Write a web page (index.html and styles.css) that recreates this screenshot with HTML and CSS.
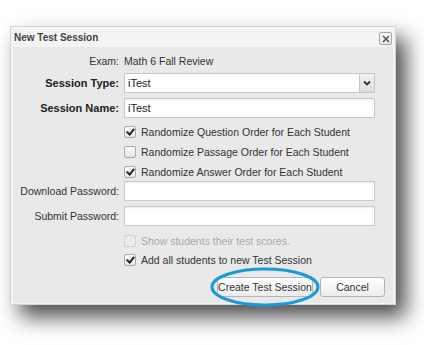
FILE: index.html
```html
<!DOCTYPE html>
<html lang="en">
<head>
  <meta charset="UTF-8" />
  <title>New Test Session</title>
  <link rel="stylesheet" href="styles.css">
</head>
<body>
  <div class="dialog">
    <div class="dialog-title">
      <span>New Test Session</span>
      <button class="close-btn">
        <svg width="8" height="8" viewBox="0 0 8 8"><path d="M1 1L7 7M7 1L1 7" stroke="#555" stroke-width="1.6"/></svg>
      </button>
    </div>
    <div class="dialog-body">
      <div class="row row-exam">
        <label>Exam:</label>
        <div class="value">Math 6 Fall Review</div>
      </div>
      <div class="row row-field">
        <label class="bold">Session Type:</label>
        <div class="select">
          <span class="select-text">iTest</span>
          <span class="select-arrow">
            <svg width="8" height="6" viewBox="0 0 8 6"><path d="M1 1.5L4 4.5L7 1.5" stroke="#333" stroke-width="1.8" fill="none"/></svg>
          </span>
        </div>
      </div>
      <div class="row row-field gap">
        <label class="bold">Session Name:</label>
        <div class="input">iTest</div>
      </div>

      <div class="checks">
        <div class="row row-check">
          <label></label>
          <div class="check-item"><span class="box checked"></span>Randomize Question Order for Each Student</div>
        </div>
        <div class="row row-check">
          <label></label>
          <div class="check-item"><span class="box"></span>Randomize Passage Order for Each Student</div>
        </div>
        <div class="row row-check short">
          <label></label>
          <div class="check-item"><span class="box checked"></span>Randomize Answer Order for Each Student</div>
        </div>
      </div>

      <div class="row row-field">
        <label>Download Password:</label>
        <div class="input"></div>
      </div>
      <div class="row row-field gap">
        <label>Submit Password:</label>
        <div class="input"></div>
      </div>

      <div class="checks2">
        <div class="row row-check short">
          <label></label>
          <div class="check-item disabled"><span class="box"></span>Show students their test scores.</div>
        </div>
        <div class="row row-check">
          <label></label>
          <div class="check-item"><span class="box checked"></span>Add all students to new Test Session</div>
        </div>
      </div>

      <div class="actions">
        <button class="btn btn-create">Create Test Session</button>
        <button class="btn btn-cancel">Cancel</button>
        <svg class="oval" width="112" height="44" viewBox="0 0 112 44"><ellipse cx="56" cy="22" rx="53" ry="18" fill="none" stroke="#1a9bd8" stroke-width="3"/></svg>
      </div>
    </div>
  </div>
</body>
</html>
```

FILE: styles.css
```css
html {
  background: #fff;
}
body {
  margin: 0;
  min-height: 345px;
  padding-top: 26px;
  box-sizing: border-box;
  background: #fff;
  font-family: 'Liberation Sans', Arial, sans-serif;
  font-size: 10.5px;
  color: #333;
}
.dialog {
  margin-left: 10px;
  width: 380px;
  background: #f3f3f3;
  border: 1px solid #d4d4d4;
  padding: 0 2px 1px 2px;
  box-shadow: 10px 12px 20px rgba(0, 0, 0, 0.7);
}
.dialog-title {
  height: 20px;
  display: flex;
  align-items: center;
  justify-content: space-between;
  padding-left: 1px;
  font-weight: bold;
  font-size: 10px;
  color: #444;
}
.close-btn {
  width: 13px;
  height: 13px;
  margin-right: 1px;
  margin-top: 3px;
  padding: 0;
  border: 1px solid #a8a8a8;
  border-radius: 2px;
  background: linear-gradient(#fafafa, #e6e6e6);
  display: flex;
  align-items: center;
  justify-content: center;
}
.dialog-body {
  background: #e9e9e9;
  padding: 4px 8px 6px 0;
}
.row {
  display: flex;
  align-items: center;
  gap: 5px;
}
.row label {
  width: 106px;
  flex: none;
  text-align: right;
  white-space: nowrap;
}
.row label.bold {
  font-weight: bold;
  font-size: 11px;
  color: #222;
}
.row-exam {
  height: 20px;
  margin-bottom: 2px;
}
.row-field {
  height: 20px;
}
.row-field.gap {
  margin-top: 5px;
}
.select,
.input {
  width: 251px;
  height: 20px;
  box-sizing: border-box;
  background: #fff;
  border: 1px solid #c9c9c9;
  box-shadow: inset 0 1px 2px rgba(0, 0, 0, 0.08);
  display: flex;
  align-items: center;
  padding-left: 3px;
  color: #222;
  font-size: 11px;
}
.select {
  padding-left: 0;
  border: none;
  box-shadow: none;
  background: transparent;
}
.select-text {
  flex: 1;
  height: 20px;
  box-sizing: border-box;
  border: 1px solid #c9c9c9;
  background: #fff;
  padding-left: 3px;
  line-height: 18px;
}
.select-arrow {
  width: 15px;
  height: 20px;
  box-sizing: border-box;
  border: 1px solid #c4c4c4;
  border-left: none;
  background: linear-gradient(#f2f2f2, #dcdcdc);
  display: flex;
  align-items: center;
  justify-content: center;
}
.checks {
  margin-top: 4px;
}
.row-check {
  height: 20px;
}
.row-check.short {
  height: 19px;
}
.check-item {
  display: flex;
  align-items: center;
  gap: 5px;
  color: #333;
  white-space: nowrap;
}
.check-item.disabled {
  color: #aaa;
}
.box {
  width: 10px;
  height: 10px;
  border: 1px solid #a9a9a9;
  border-radius: 2px;
  background: linear-gradient(#fdfdfd, #e4e4e4);
  position: relative;
}
.check-item.disabled .box {
  border-color: #d0d0d0;
  background: #ececec;
}
.box.checked::after {
  content: '';
  position: absolute;
  left: 3px;
  top: 0px;
  width: 3px;
  height: 6px;
  border: solid #222;
  border-width: 0 2px 2px 0;
  transform: rotate(40deg);
}
.checks2 {
  margin-top: 5px;
}
.actions {
  margin-top: 7px;
  display: flex;
  justify-content: flex-end;
  gap: 7px;
  position: relative;
}
.btn {
  height: 20px;
  padding: 0;
  border: 1px solid #b5b5b5;
  border-radius: 3px;
  background: linear-gradient(#ffffff, #ececec);
  font-family: 'Liberation Sans', Arial, sans-serif;
  font-size: 10.5px;
  color: #333;
  white-space: nowrap;
}
.btn-create {
  width: 96px;
}
.btn-cancel {
  width: 65px;
}
.oval {
  position: absolute;
  left: 196px;
  top: -12px;
}
```
